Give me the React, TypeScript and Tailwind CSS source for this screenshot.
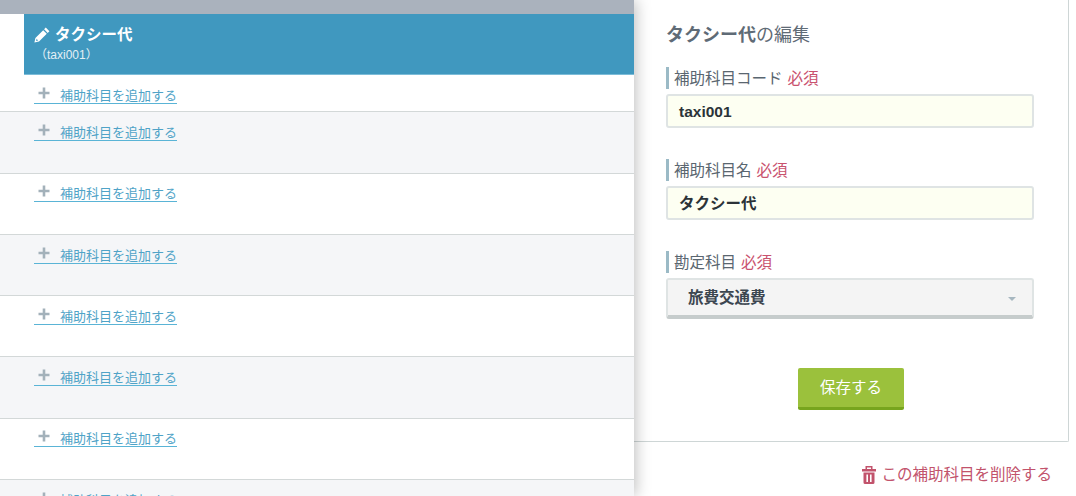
const rows = [
  { h: "h-[37px]", bg: "bg-white", pt: "pt-[11px]" },
  { h: "h-[62px]", bg: "bg-[#f5f6f8]", pt: "pt-[11px]" },
  { h: "h-[61px]", bg: "bg-white", pt: "pt-[10px]" },
  { h: "h-[61px]", bg: "bg-[#f5f6f8]", pt: "pt-[11px]" },
  { h: "h-[61px]", bg: "bg-white", pt: "pt-[11px]" },
  { h: "h-[62px]", bg: "bg-[#f5f6f8]", pt: "pt-[11px]" },
  { h: "h-[61px]", bg: "bg-white", pt: "pt-[10px]" },
  { h: "h-[61px]", bg: "bg-[#f5f6f8]", pt: "pt-[11px]" },
]

function AddLink() {
  return (
    <a className="ml-[34px] flex h-[18px] w-[143px] items-center border-b border-[#5ab4d6] text-[13px] leading-[17px] text-[#4fa3c7]">
      <svg width="12" height="12" viewBox="0 0 12 12" className="ml-[4px] mr-[10px] mt-[-4px] shrink-0">
        <path d="M4.7 0.5h2.6v4.2h4.2v2.6H7.3v4.2H4.7V7.3H0.5V4.7h4.2z" fill="#a3b1ba" />
      </svg>
      <span className="mt-[2px] whitespace-nowrap">補助科目を追加する</span>
    </a>
  )
}

function FieldLabel({ label }: { label: string }) {
  return (
    <div className="flex h-[22px] items-center border-l-[3px] border-[#9bbac6] pl-[5px] pt-[2px] text-[15.5px] text-[#5a6670]">
      <span>{label}</span>
      <span className="ml-[5px] text-[#c9526e]">必須</span>
    </div>
  )
}

function TextField({ value }: { value: string }) {
  return (
    <div className="mt-[5px] flex h-[34px] w-[368px] items-center rounded-[3px] border-2 border-[#dfe4e4] bg-[#fdfff2] pl-[11px] pt-[2px] text-[15.5px] font-bold text-[#2b3338]">
      {value}
    </div>
  )
}

export default function App() {
  return (
    <div className="flex h-[496px] w-[1076px] overflow-hidden bg-white font-['Liberation_Sans','Noto_Sans_CJK_JP',sans-serif]">
      <div className="relative z-10 w-[634px] shrink-0 shadow-[2px_0_14px_rgba(0,0,0,0.25)]">
        <div className="h-[14px] bg-[#aab2bd]" />
        <div className="flex h-[61px]">
          <div className="w-[24px] bg-white" />
          <div className="flex-1 border-b border-[#7cbcd8] bg-[#4098bf] pl-[10px] pt-[11px] text-white">
            <div className="flex h-[20px] items-center">
              <svg width="16" height="16" viewBox="0 0 16 16" className="mr-[5px]">
                <path
                  d="M11.8.6l3.6 3.6-1.7 1.7-3.6-3.6zM9.2 3.2l3.6 3.6-7.8 7.8-4.6 1 1-4.6zM2.6 11.7l-.5 2.2 2 -.5z"
                  fill="#fff"
                  fillRule="evenodd"
                />
              </svg>
              <span className="text-[15.5px] font-bold">タクシー代</span>
            </div>
            <div className="ml-[1px] mt-[2px] text-[12px] leading-[16px] text-[#e3eff5]">（taxi001）</div>
          </div>
        </div>
        {rows.map((row, i) => (
          <div key={i} className={`${row.h} ${row.bg} ${row.pt} border-b border-[#d3d8d8]`}>
            <AddLink />
          </div>
        ))}
      </div>

      <div className="flex w-[435px] shrink-0 flex-col">
        <div className="h-[442px] rounded-br-[2px] border-r border-b border-[#ced6d6] pl-[32px] pt-[23px]">
          <h2 className="h-[24px] text-[18px] leading-[24px] text-[#5f6b76]">
            <span className="font-bold">タクシー代</span>の編集
          </h2>
          <div className="mt-[20px]">
            <FieldLabel label="補助科目コード" />
            <TextField value="taxi001" />
          </div>
          <div className="mt-[31px]">
            <FieldLabel label="補助科目名" />
            <TextField value="タクシー代" />
          </div>
          <div className="mt-[31px]">
            <FieldLabel label="勘定科目" />
            <div className="mt-[5px] flex h-[41px] w-[368px] items-center justify-between rounded-[3px] border-2 border-b-[4px] border-[#dfe4e4] border-b-[#c6cccc] bg-[#f4f4f4] pl-[20px] pr-[16px] text-[15.5px] font-bold text-[#3c4650]">
              <span>旅費交通費</span>
              <span className="mt-[3px] h-0 w-0 border-x-[4px] border-t-[4px] border-x-transparent border-t-[#a7b7c0]" />
            </div>
          </div>
          <div className="mt-[49px] flex w-[370px] justify-center">
            <button className="h-[42px] w-[106px] rounded-[2px] border-b-[3px] border-[#77a51e] bg-[#9bc13c] text-[15.5px] text-white">
              保存する
            </button>
          </div>
        </div>
        <div className="flex justify-end pr-[17px] pt-[22px]">
          <a className="flex items-center text-[15.5px] leading-[22px] text-[#c2536c]">
            <svg width="14" height="18" viewBox="0 0 14 18" className="mr-[5px]">
              <path
                fill="#c2536c"
                fillRule="evenodd"
                d="M3.5 0h7v3H14v2.6H0V3h3.5zM5 1.5V3h4V1.5zM1.5 6.6h11v9.8a1.6 1.6 0 0 1-1.6 1.6H3.1a1.6 1.6 0 0 1-1.6-1.6zM4.4 8.5v7.5h1.6V8.5zM8 8.5v7.5h1.6V8.5z"
              />
            </svg>
            この補助科目を削除する
          </a>
        </div>
      </div>
    </div>
  )
}
